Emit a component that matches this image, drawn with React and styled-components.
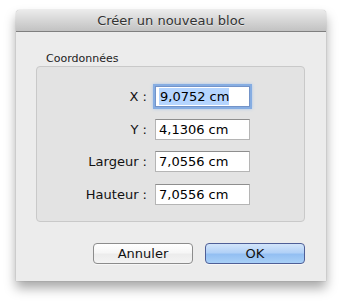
import React from "react";
import styled, { createGlobalStyle } from "styled-components";

const GlobalStyle = createGlobalStyle`
    html, body {
        margin: 0;
        padding: 0;
        background: #ffffff;
    }
    body {
        font-family: "DejaVu Sans", "Liberation Sans", sans-serif;
        color: #111;
    }
`;

// valeurs du bloc
const fields = [
    { label: "X :", value: "9,0752 cm", focused: true },
    { label: "Y :", value: "4,1306 cm" },
    { label: "Largeur :", value: "7,0556 cm" },
    { label: "Hauteur :", value: "7,0556 cm" },
];

export default function App(){
    return(
        <>
            <GlobalStyle />
            <Page>
                <Window>
                    <TitleBar>Créer un nouveau bloc</TitleBar>
                    <Body>
                        <GroupLabel>Coordonnées</GroupLabel>
                        <GroupBox>
                            <FieldGrid>
                                {fields.map((f) => (
                                    <React.Fragment key={f.label}>
                                        <FieldLabel>{f.label}</FieldLabel>
                                        <Field focused={f.focused}>
                                            {f.focused ? <Selected>{f.value}</Selected> : f.value}
                                        </Field>
                                    </React.Fragment>
                                ))}
                            </FieldGrid>
                        </GroupBox>
                        <ButtonRow>
                            <Button>Annuler</Button>
                            <Button primary>OK</Button>
                        </ButtonRow>
                    </Body>
                </Window>
            </Page>
        </>
    );
}

const Page = styled.div`
    padding: 10px 16px 0 16px;
    height: 304px;
    box-sizing: border-box;
`;

const Window = styled.div`
    width: 310px;
    height: 271px;
    background: #ececec;
    border-radius: 4px 4px 0 0;
    box-shadow: 0 7px 12px rgba(0, 0, 0, 0.35), 0 0 1px rgba(0, 0, 0, 0.45);
    display: flex;
    flex-direction: column;
    overflow: hidden;
`;

const TitleBar = styled.div`
    height: 21px;
    flex-shrink: 0;
    background: linear-gradient(#ebebeb, #d6d6d6 50%, #c2c2c2);
    border-bottom: 1px solid #7f7f7f;
    display: flex;
    align-items: center;
    justify-content: center;
    font-size: 13px;
    color: #333;
    text-shadow: 0 1px 0 rgba(255, 255, 255, 0.5);
`;

const Body = styled.div`
    display: flex;
    flex-direction: column;
    padding: 20px 21px 0 20px;
`;

const GroupLabel = styled.div`
    font-size: 11px;
    line-height: 13px;
    height: 13px;
    margin: 0 0 1px 10px;
    color: #222;
`;

const GroupBox = styled.div`
    height: 156px;
    box-sizing: border-box;
    background: #e3e3e3;
    border: 1px solid #c9c9c9;
    border-radius: 4px;
    padding-top: 19px;
`;

const FieldGrid = styled.div`
    display: grid;
    grid-template-columns: 110px 95px;
    column-gap: 8px;
    row-gap: 11.5px;
    align-items: center;
`;

const FieldLabel = styled.div`
    text-align: right;
    font-size: 13px;
    color: #111;
`;

const Field = styled.div`
    height: 21px;
    box-sizing: border-box;
    background: #fff;
    border: 1px solid #b5b5b5;
    border-top-color: #8e8e8e;
    padding-left: 3px;
    font-size: 13px;
    line-height: 19px;
    color: #000;
    white-space: nowrap;
    box-shadow: ${({ focused }) =>
        focused ? "0 0 0 2px #86ade2, 0 0 3px 2px #a9c6ec" : "none"};
    border-color: ${({ focused }) => (focused ? "#7393c8" : undefined)};
`;

const Selected = styled.span`
    background: #b5d5ff;
    padding: 1px 0 1px 1px;
`;

const ButtonRow = styled.div`
    display: flex;
    justify-content: flex-end;
    gap: 12px;
    margin-top: 21px;
`;

const Button = styled.div`
    width: 100px;
    height: 21px;
    box-sizing: border-box;
    border-radius: 4px;
    display: flex;
    align-items: center;
    justify-content: center;
    font-size: 13px;
    color: #111;
    border: 1px solid ${({ primary }) => (primary ? "#4f5f97" : "#8c8c8c")};
    background: ${({ primary }) =>
        primary
            ? "linear-gradient(#d3e5fa, #b2d1f7 45%, #93bff2 55%, #a9d0f7)"
            : "linear-gradient(#ffffff, #f6f6f6 45%, #ececec 55%, #f3f3f3)"};
    box-shadow: 0 1px 0 rgba(255, 255, 255, 0.6);
`;
